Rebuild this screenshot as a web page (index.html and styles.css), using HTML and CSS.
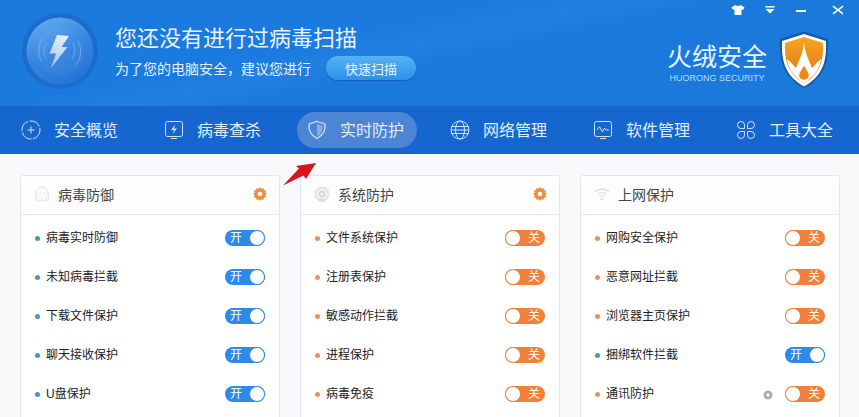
FILE: index.html
```html
<!DOCTYPE html>
<html lang="zh">
<head>
<meta charset="utf-8">
<title>火绒安全</title>
<link rel="stylesheet" href="styles.css">
</head>
<body>
<div class="app">
  <header class="top">
    <div class="orb">
      <svg viewBox="0 0 80 80" width="80" height="80">
        <defs>
          <linearGradient id="orbg" x1="0.25" y1="0" x2="0.7" y2="1"><stop offset="0" stop-color="#62a8ee"/><stop offset="0.5" stop-color="#3585e0"/><stop offset="1" stop-color="#2474d6"/></linearGradient>
          <linearGradient id="boltg" x1="0.6" y1="0" x2="0.3" y2="1"><stop offset="0" stop-color="#e4eefa"/><stop offset="1" stop-color="#9fc6f0"/></linearGradient>
        </defs>
        <circle cx="40" cy="40" r="38" fill="#1c6cc9"/>
        <circle cx="40" cy="40" r="33.500" fill="url(#orbg)"/>
        <circle cx="40" cy="40" r="24" fill="#fff" fill-opacity=".04"/>
        <path d="M23 27a21 21 0 0 0-1 24M58 30a21 21 0 0 1-3 25M27 31a16 16 0 0 0-1 17M53 32a16 16 0 0 1-1 16" fill="none" stroke="#a9cdf3" stroke-opacity=".45" stroke-width="1"/>
        <path d="M37 24L49 25 41.500 36 47.500 36 31 57 36 42.500 29.500 42.500z" fill="url(#boltg)"/>
      </svg>
    </div>
    <div class="status">
      <h1 class="headline">您还没有进行过病毒扫描</h1>
      <div class="advice">
        <span>为了您的电脑安全，建议您进行</span>
        <button class="scan">快速扫描</button>
      </div>
    </div>
    <div class="brand">
      <div class="win">
        <svg viewBox="0 0 14 12" width="14" height="12"><path d="M4 1L0.5 3.500 2 6l1.500-.8V11h7V5.200l1.500.8 1.500-2.500L10 1 8.500 1.800h-3z" fill="#fff"/></svg>
        <svg viewBox="0 0 12 10" width="12" height="10"><path d="M1.500 1h9v1.500h-9zM1.500 4h9L6 8.500z" fill="#fff"/></svg>
        <svg viewBox="0 0 12 10" width="12" height="10"><rect x="1" y="5" width="10" height="2" fill="#fff"/></svg>
        <svg class="win-close" viewBox="0 0 12 10" width="12" height="10"><path d="M1.500 0.500l4.500 3.500 4.500-3.500 1 1.200L7.300 5l4.200 3.300-1 1.200L6 6 1.500 9.500l-1-1.200L4.700 5 .5 1.700z" fill="#fff"/></svg>
      </div>
      <div class="logo">
        <div class="wordmark">
          <div class="cn">火绒安全</div>
          <div class="en">HUORONG SECURITY</div>
        </div>
        <svg class="shield" viewBox="0 0 50 58" width="50" height="58">
          <defs><linearGradient id="sg" x1="0" y1="0" x2="0" y2="1"><stop offset="0" stop-color="#f7a51e"/><stop offset="0.7" stop-color="#e8801a"/></linearGradient></defs>
          <path d="M25 .5L49 8c1 22-3 38-24 49.500C4 46 0 30 1 8z" fill="#1558a8"/>
          <path d="M25 3l22 7c.8 20-3 35-22 45.500C6 45 2.200 30 3 10z" fill="#fff"/>
          <path d="M25 6l19 6c.6 18-3 31-19 40.500C9 43 5.400 30 6 12z" fill="url(#sg)"/>
          <path d="M25 11C26 23 30 29 33 37 36 34 38 31 42 28 41 37 37 44 25 52.500 13 44 9 37 8 28 12 31 14 34 17 37 20 29 24 23 25 11z" fill="#fff"/>
          <path d="M25 35C28 39 30.500 43 29.500 46 28.500 49.500 21.500 49.500 20.500 46 19.500 43 22 39 25 35z" fill="#f18a14"/>
        </svg>
      </div>
    </div>
  </header>
  <nav class="nav">
    <a class="tab">
      <svg viewBox="0 0 20 20" width="20" height="20"><circle cx="10" cy="10" r="9" fill="none" stroke="#cfe3f8" stroke-width="1" stroke-dasharray="12 1.500"/><path d="M10 6.500v7M6.500 10h7" stroke="#cfe3f8"/></svg>
      <span>安全概览</span>
    </a>
    <a class="tab">
      <svg viewBox="0 0 20 20" width="20" height="20"><rect x="1.500" y="1.500" width="17" height="15" rx="2" fill="none" stroke="#cfe3f8"/><path d="M7 18.500h6" stroke="#cfe3f8"/><path d="M11.500 4.500L7 10h3l-1.500 4L13 8.500h-3z" fill="#cfe3f8"/></svg>
      <span>病毒查杀</span>
    </a>
    <a class="tab active">
      <svg viewBox="0 0 20 20" width="20" height="20"><path d="M10 1.500l8 2.500c.3 7-1.500 11-8 14.500C3.500 15 1.700 11 2 4z" fill="#4c84d6" stroke="#cfe3f8" stroke-width="1.300"/><path d="M10 4l5.500 1.700c.2 5-1 8.500-5.500 11z" fill="#86aee6"/></svg>
      <span>实时防护</span>
    </a>
    <a class="tab">
      <svg viewBox="0 0 20 20" width="20" height="20"><g fill="none" stroke="#cfe3f8"><circle cx="10" cy="10" r="9"/><ellipse cx="10" cy="10" rx="4.500" ry="9"/><path d="M1.800 6.500h16.400M1.800 13.500h16.400M1 10h18"/></g></svg>
      <span>网络管理</span>
    </a>
    <a class="tab">
      <svg viewBox="0 0 20 20" width="20" height="20"><rect x="1.500" y="1.500" width="17" height="15" rx="2" fill="none" stroke="#cfe3f8"/><path d="M7 18.500h6M4 10l2.500-3.500 3 5.500 2-4 1.500 2h3" fill="none" stroke="#cfe3f8"/></svg>
      <span>软件管理</span>
    </a>
    <a class="tab">
      <svg viewBox="0 0 20 20" width="20" height="20"><g fill="none" stroke="#cfe3f8"><path d="M1.500 5a3.500 3.500 0 0 1 7 0v3.500H5A3.500 3.500 0 0 1 1.500 5zM18.500 5a3.500 3.500 0 0 0-7 0v3.500H15A3.500 3.500 0 0 0 18.500 5zM1.500 15a3.500 3.500 0 0 0 7 0v-3.500H5A3.500 3.500 0 0 0 1.500 15zM18.500 15a3.500 3.500 0 0 1-7 0v-3.500H15a3.500 3.500 0 0 1 3.500 3.500z"/></g></svg>
      <span>工具大全</span>
    </a>
  </nav>
  <main class="content">
    <svg class="arrow" viewBox="0 0 36 32" width="36" height="32"><path d="M1 29.500L17 12.500 14 10 34 7 24 23 21.500 19.500z" fill="#d8141c"/></svg>
    <section class="card">
      <div class="card-head">
        <svg class="head-icon" viewBox="0 0 18 20" width="16" height="18"><path d="M2 18V9a7 7 0 0 1 14 0v9l-2.300-1.500L11.300 18 9 16.500 6.700 18l-2.400-1.500z" fill="#fafafa" stroke="#dcdcdc"/><circle cx="6.500" cy="9" r=".8" fill="#dcdcdc"/><circle cx="11.500" cy="9" r=".8" fill="#dcdcdc"/></svg>
        <span class="card-title">病毒防御</span>
        <svg class="gear" viewBox="0 0 14 14" width="14" height="14"><use href="#gearshape"/></svg>
      </div>
      <ul class="rows">
        <li class="row on"><span class="label">病毒实时防御</span><span class="switch"><b>开</b><i></i></span></li>
        <li class="row on"><span class="label">未知病毒拦截</span><span class="switch"><b>开</b><i></i></span></li>
        <li class="row on"><span class="label">下载文件保护</span><span class="switch"><b>开</b><i></i></span></li>
        <li class="row on"><span class="label">聊天接收保护</span><span class="switch"><b>开</b><i></i></span></li>
        <li class="row on"><span class="label">U盘保护</span><span class="switch"><b>开</b><i></i></span></li>
      </ul>
    </section>
    <section class="card">
      <div class="card-head">
        <svg class="head-icon" viewBox="0 0 18 18" width="16" height="16"><circle cx="9" cy="9" r="8.500" fill="#e4e4e4"/><circle cx="9" cy="9" r="6" fill="#f8f8f8"/><circle cx="9" cy="9" r="4" fill="#d6d6d6"/><circle cx="9" cy="9" r="2" fill="#f4f4f4"/><path d="M6 14h6l1 3.500H5z" fill="#dcdcdc"/></svg>
        <span class="card-title">系统防护</span>
        <svg class="gear" viewBox="0 0 14 14" width="14" height="14"><use href="#gearshape"/></svg>
      </div>
      <ul class="rows">
        <li class="row off"><span class="label">文件系统保护</span><span class="switch"><i></i><b>关</b></span></li>
        <li class="row off"><span class="label">注册表保护</span><span class="switch"><i></i><b>关</b></span></li>
        <li class="row off"><span class="label">敏感动作拦截</span><span class="switch"><i></i><b>关</b></span></li>
        <li class="row off"><span class="label">进程保护</span><span class="switch"><i></i><b>关</b></span></li>
        <li class="row off"><span class="label">病毒免疫</span><span class="switch"><i></i><b>关</b></span></li>
      </ul>
    </section>
    <section class="card">
      <div class="card-head">
        <svg class="head-icon" viewBox="0 0 18 16" width="16" height="14"><g fill="none" stroke="#e0e0e0" stroke-width="1.500"><path d="M1 5.500a11.500 11.500 0 0 1 16 0M3.800 8.500a7.500 7.500 0 0 1 10.400 0M6.500 11a3.500 3.500 0 0 1 5 0"/></g><circle cx="9" cy="14" r="1.500" fill="#e0e0e0"/></svg>
        <span class="card-title">上网保护</span>
      </div>
      <ul class="rows">
        <li class="row off"><span class="label">网购安全保护</span><span class="switch"><i></i><b>关</b></span></li>
        <li class="row off"><span class="label">恶意网址拦截</span><span class="switch"><i></i><b>关</b></span></li>
        <li class="row off"><span class="label">浏览器主页保护</span><span class="switch"><i></i><b>关</b></span></li>
        <li class="row on"><span class="label">捆绑软件拦截</span><span class="switch"><b>开</b><i></i></span></li>
        <li class="row off"><span class="label">通讯防护</span>
          <svg class="gear small" viewBox="0 0 14 14" width="10" height="10"><use href="#gearshape"/></svg>
          <span class="switch"><i></i><b>关</b></span></li>
      </ul>
    </section>
  </main>
</div>
<svg class="defs" width="0" height="0"><defs><g id="gearshape"><path fill-rule="evenodd" d="M7 0l1.300 1.800L10.500.9l.4 2.300 2.300.4-.9 2.100L14 7l-1.700 1.300.9 2.100-2.300.4-.4 2.300-2.200-.9L7 14l-1.300-1.800-2.200.9-.4-2.300-2.300-.4.9-2.100L0 7l1.700-1.300-.9-2.100 2.300-.4.4-2.300 2.200.9zM7 4.700a2.300 2.300 0 1 0 0 4.600 2.300 2.300 0 0 0 0-4.600z"/></g></defs></svg>
</body>
</html>
```
FILE: styles.css
```css
* { box-sizing: border-box; }
html, body { margin: 0; padding: 0; }
body {
  width: 859px;
  height: 417px;
  overflow: hidden;
  font-family: "Liberation Sans", "Noto Sans CJK SC", sans-serif;
}
.app { width: 859px; height: 417px; display: flex; flex-direction: column; background: #f7f9fb; }
.top {
  height: 106px;
  flex: none;
  background: linear-gradient(168deg, #1a7ade 0%, #1a7ade 38%, #2180e0 46%, #1b79dc 54%, #1b79dc 100%);
  display: flex;
  padding-left: 20px;
}
.orb { width: 80px; height: 80px; margin-top: 11px; flex: none; }
.status { margin-left: 15px; padding-top: 24px; color: #e8f3ff; }
.headline { margin: 0; font-size: 22px; line-height: 30px; font-weight: 400; }
.advice { display: flex; align-items: center; margin-top: 2px; font-size: 14px; }
.advice span { width: 211px; }
.scan {
  width: 90px; height: 24px; border: 0; border-radius: 12px;
  color: #e6f3ff; font: 13px "Liberation Sans", "Noto Sans CJK SC", sans-serif;
  background: linear-gradient(#55b2f4, #2f90e8);
  box-shadow: 0 1px 1px #125fb8;
}
.brand { margin-left: auto; width: 200px; display: flex; flex-direction: column; }
.win { height: 20px; padding-right: 15px; display: flex; justify-content: flex-end; gap: 19px; align-items: center; }
.win-close { margin-left: 6px; }
.logo { display: flex; align-items: flex-start; margin-top: 11px; padding-left: 7px; }
.wordmark { color: #e8f5ff; width: 102px; margin-top: 11px; text-align: center; }
.cn { font-size: 25px; line-height: 30px; }
.en { font-size: 9px; line-height: 10px; margin-top: 1px; color: #b9dcf8; white-space: nowrap; }
.shield { margin-left: 11px; }

.nav {
  height: 48px;
  flex: none;
  background: #1566cf;
  display: flex;
  padding-left: 21px;
  align-items: flex-start;
  padding-top: 6px;
  gap: 23px;
}
.tab {
  width: 120px; height: 36px; border-radius: 18px; flex: none;
  display: flex; align-items: center;
  color: #e0eefc; font-size: 16px;
}
.tab span { margin-left: 13px; padding-bottom: 2px; white-space: nowrap; }
.tab.active { background: #4c84d6; padding-left: 10px; margin-left: -10px; margin-right: 10px; }

.content {
  position: relative;
  flex: 1;
  display: grid;
  grid-template-columns: repeat(3, 260px);
  gap: 20px;
  padding: 21px 0 0 20px;
  min-height: 0;
  overflow: hidden;
}
.arrow { position: absolute; left: 282px; top: 2px; }
.card { background: #fff; border: 1px solid #e3e6ea; border-radius: 3px; height: 300px; }
.card-head { height: 39px; display: flex; align-items: center; padding: 0 12px 2px 13px; border-bottom: 1px solid #e3e6ea; background: #fdfdfe; }
.head-icon { flex: none; }
.card-title { font-size: 14px; color: #444; margin-left: 8px; }
.gear { margin-left: auto; fill: #e98f3f; }
.gear.small { fill: #a9a9a9; margin-left: auto; margin-right: 12px; margin-top: 4px; }
.rows { list-style: none; margin: 0; padding: 15px 14px 0 14px; }
.row { height: 39px; display: flex; align-items: flex-start; font-size: 12px; color: #222; line-height: 17px; }
.label { display: block; position: relative; padding-left: 11px; }
.label::before { content: ""; position: absolute; left: 0; top: 6px; width: 5px; height: 5px; border-radius: 50%; }
.on .label::before { background: #4a93c8; }
.off .label::before { background: #e39565; }
.switch {
  margin-left: auto; width: 40px; height: 16px; border-radius: 8px;
  display: flex; align-items: center; justify-content: space-between;
  color: #fff; font-size: 12px; line-height: 16px;
}
.gear.small + .switch { margin-left: 0; }
.switch b { font-weight: 400; padding: 0 5px; }
.switch i { width: 16px; height: 16px; border-radius: 50%; background: #fff; flex: none; }
.on .switch { background: #2e8ae8; }
.on .switch i { border: 1px solid #2e8ae8; }
.off .switch { background: #f1803a; }
.off .switch i { border: 1px solid #f1803a; }
.defs { position: absolute; }
```
